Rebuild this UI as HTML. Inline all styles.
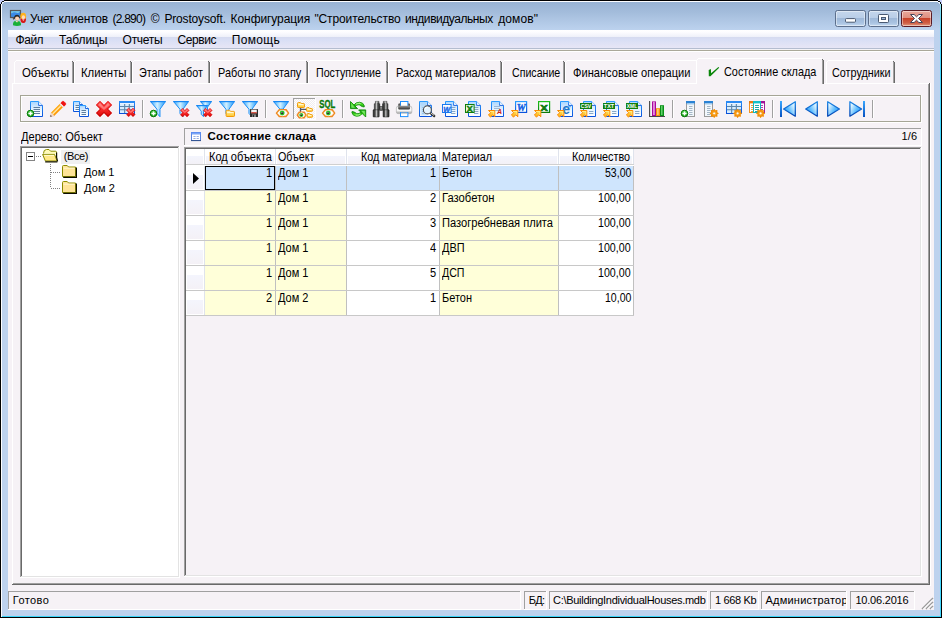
<!DOCTYPE html>
<html lang="ru"><head><meta charset="utf-8"><title>Учет клиентов</title>
<style>
html,body{margin:0;padding:0}
body{width:942px;height:618px;overflow:hidden;position:relative;background:#c6cffa;font-family:"Liberation Sans",sans-serif;font-size:11px;color:#000}
div,span.t,svg{position:absolute;box-sizing:border-box}
.t{white-space:pre;line-height:16px;height:16px}
svg{overflow:visible}
</style></head><body>
<svg width="0" height="0" style="left:0;top:0"><defs>
<linearGradient id="gDoc" x1="0" y1="0" x2="0" y2="1"><stop offset="0" stop-color="#a9d6ff"/><stop offset=".55" stop-color="#e8f4ff"/><stop offset="1" stop-color="#ffffff"/></linearGradient>
<linearGradient id="gDocS" x1="0" y1="0" x2="0" y2="1"><stop offset="0" stop-color="#2a9cff"/><stop offset="1" stop-color="#0a52dc"/></linearGradient>
<linearGradient id="gRed" x1="0" y1="0" x2="0" y2="1"><stop offset="0" stop-color="#ff7a7a"/><stop offset=".5" stop-color="#fb2e2e"/><stop offset="1" stop-color="#e00808"/></linearGradient>
<linearGradient id="gFun" x1="0" y1="0" x2="1" y2="0"><stop offset="0" stop-color="#2f9ffa"/><stop offset=".22" stop-color="#7fcbff"/><stop offset=".45" stop-color="#d4f1ff"/><stop offset=".7" stop-color="#7cc9ff"/><stop offset="1" stop-color="#2b98f5"/></linearGradient>
<linearGradient id="gGreen" x1="0" y1="0" x2="0" y2="1"><stop offset="0" stop-color="#58e058"/><stop offset="1" stop-color="#069006"/></linearGradient>
<linearGradient id="gOr" x1="0" y1="0" x2="0" y2="1"><stop offset="0" stop-color="#ffea6a"/><stop offset="1" stop-color="#ffa808"/></linearGradient>
<linearGradient id="gFold" x1="0" y1="0" x2="0" y2="1"><stop offset="0" stop-color="#fff2a8"/><stop offset="1" stop-color="#ffc62e"/></linearGradient>
<linearGradient id="gNav" x1="0" y1="0" x2="0" y2="1"><stop offset="0" stop-color="#e8f6ff"/><stop offset=".5" stop-color="#8ccfff"/><stop offset="1" stop-color="#3fa2f2"/></linearGradient>
<linearGradient id="gGray" x1="0" y1="0" x2="0" y2="1"><stop offset="0" stop-color="#f4f4f4"/><stop offset=".5" stop-color="#9a9a9a"/><stop offset="1" stop-color="#e0e0e0"/></linearGradient>
<linearGradient id="gBin" x1="0" y1="0" x2="1" y2="0"><stop offset="0" stop-color="#262626"/><stop offset=".3" stop-color="#4c4c4c"/><stop offset=".5" stop-color="#c4c4c4"/><stop offset=".68" stop-color="#585858"/><stop offset="1" stop-color="#1c1c1c"/></linearGradient>
<linearGradient id="gTbl" x1="0" y1="0" x2="0" y2="1"><stop offset="0" stop-color="#2a8cf4"/><stop offset="1" stop-color="#0a50d8"/></linearGradient>
<radialGradient id="gEye" cx=".5" cy=".5" r=".5"><stop offset="0" stop-color="#202020"/><stop offset=".38" stop-color="#303030"/><stop offset=".5" stop-color="#22b022"/><stop offset="1" stop-color="#3fd43f"/></radialGradient>
<linearGradient id="gPrn" x1="0" y1="0" x2="0" y2="1"><stop offset="0" stop-color="#e8e8e8"/><stop offset=".55" stop-color="#ffffff"/><stop offset="1" stop-color="#9c9c9c"/></linearGradient>
<linearGradient id="gPrnD" x1="0" y1="0" x2="0" y2="1"><stop offset="0" stop-color="#3a3a3a"/><stop offset=".5" stop-color="#8a8a8a"/><stop offset="1" stop-color="#303030"/></linearGradient>
<linearGradient id="gRedO" x1="0" y1="0" x2="0" y2="1"><stop offset="0" stop-color="#f83030"/><stop offset="1" stop-color="#b80000"/></linearGradient>
<linearGradient id="gGreen2" x1="0" y1="0" x2="0" y2="1"><stop offset="0" stop-color="#86f25a"/><stop offset=".5" stop-color="#3fd41c"/><stop offset="1" stop-color="#12a008"/></linearGradient>
<linearGradient id="gGrS" x1="0" y1="0" x2="0" y2="1"><stop offset="0" stop-color="#1cc01c"/><stop offset="1" stop-color="#0a7a0a"/></linearGradient>
<linearGradient id="gNavR" x1="0" y1="0.1" x2="1" y2="0.75"><stop offset="0" stop-color="#ffffff"/><stop offset=".22" stop-color="#cfeeff"/><stop offset=".6" stop-color="#5cbcff"/><stop offset="1" stop-color="#1e96f8"/></linearGradient>
<linearGradient id="gNavL" x1="1" y1="0.1" x2="0" y2="0.75"><stop offset="0" stop-color="#ffffff"/><stop offset=".22" stop-color="#cfeeff"/><stop offset=".6" stop-color="#5cbcff"/><stop offset="1" stop-color="#1e96f8"/></linearGradient>
<linearGradient id="gNavS" x1="0" y1="0" x2="0" y2="1"><stop offset="0" stop-color="#1a86e6"/><stop offset="1" stop-color="#0546b4"/></linearGradient>
<linearGradient id="gNavB" x1="0" y1="0" x2="0" y2="1"><stop offset="0" stop-color="#3aa8ff"/><stop offset="1" stop-color="#0650c0"/></linearGradient>
</defs></svg>
<div style="left:0px;top:0px;width:942px;height:618px;background:#000"></div>
<div style="left:1px;top:1px;width:940px;height:616px;background:#fcfdff"></div>
<div style="left:2px;top:1px;width:939px;height:616px;background:linear-gradient(#fcfdff 0,#fcfdff 1px,#a8ecfa 3px,#7fe0f8 10px,#40d8ff 30px,#40d8ff 100%)"></div>
<div style="left:2px;top:2px;width:938px;height:614px;background:linear-gradient(#98b3d4 0px,#a3bcdb 10px,#b4cbe8 22px,#bcd2ee 28px,#bdd2ee 40px,#bdd2ee 100%)"></div>
<div style="left:2px;top:616px;width:938px;height:1px;background:#38d4f8"></div>
<div style="left:0px;top:0px;width:4px;height:1px;background:#c6cffa"></div>
<div style="left:0px;top:1px;width:2px;height:1px;background:#c6cffa"></div>
<div style="left:0px;top:2px;width:1px;height:2px;background:#c6cffa"></div>
<div style="left:2px;top:1px;width:2px;height:1px;background:#101418"></div>
<div style="left:1px;top:2px;width:1px;height:2px;background:#101418"></div>
<div style="left:2px;top:2px;width:2px;height:1px;background:#eef5fb"></div>
<div style="left:2px;top:3px;width:1px;height:1px;background:#e2eef9"></div>
<div style="left:938px;top:0px;width:4px;height:1px;background:#c6cffa"></div>
<div style="left:940px;top:1px;width:2px;height:1px;background:#c6cffa"></div>
<div style="left:941px;top:2px;width:1px;height:2px;background:#c6cffa"></div>
<div style="left:938px;top:1px;width:2px;height:1px;background:#101418"></div>
<div style="left:940px;top:2px;width:1px;height:2px;background:#101418"></div>
<div style="left:938px;top:2px;width:2px;height:1px;background:#eef5fb"></div>
<div style="left:939px;top:3px;width:1px;height:1px;background:#e2eef9"></div>
<div style="left:8px;top:30px;width:926px;height:580px;background:#f6f2f6"></div>
<svg style="left:9px;top:9px" width="18" height="18" viewBox="0 0 18 18"><rect x="1.5" y="1.5" width="10" height="7" fill="#3a8ae8" stroke="#585858" stroke-width="1.2"/><path d="M2.2 4.4Q5 2.4 7 3.6T10.8 3V2.2H2.2Z" fill="#7ed0e8"/><path d="M4 10.2L6 8.6" stroke="#404040" stroke-width="1.2"/><ellipse cx="14.2" cy="7.2" rx="2.9" ry="3.4" fill="#ffb21c"/><ellipse cx="14.4" cy="8.2" rx="1.6" ry="1.9" fill="#ffd8c0"/><path d="M11.4 9.2Q11 13.8 14.2 14T17 9.2Q14.2 11.4 11.4 9.2Z" fill="#d81818"/><path d="M13 10.4L14.3 11.8L15.6 10.4Z" fill="#fff"/><ellipse cx="8" cy="8.2" rx="2.7" ry="2.5" fill="#282828"/><ellipse cx="8.1" cy="9.6" rx="2.1" ry="2.2" fill="#ffd4b4"/><path d="M4 16.2Q3.6 11.6 8 11.8T12 16.2Q8 17.6 4 16.2Z" fill="#18b038"/><path d="M6.4 12L8 13.6L9.6 12Z" fill="#f0fff0"/><path d="M7.6 12H8.6L8.2 13Z" fill="#e84010"/></svg>
<span class="t" style="top:11px;font-size:12px;left:30.10px;letter-spacing:-0.649px;">Учет</span>
<span class="t" style="top:11px;font-size:12px;left:58.60px;letter-spacing:-0.171px;">клиентов</span>
<span class="t" style="top:11px;font-size:12px;left:112.40px;letter-spacing:-0.753px;">(2.890)</span>
<span class="t" style="top:11px;font-size:12px;left:150.80px;">©</span>
<span class="t" style="top:11px;font-size:12px;left:164.40px;letter-spacing:-0.159px;">Prostoysoft.</span>
<span class="t" style="top:11px;font-size:12px;left:230.60px;letter-spacing:-0.084px;">Конфигурация</span>
<span class="t" style="top:11px;font-size:12px;left:314.40px;letter-spacing:-0.113px;">"Строительство</span>
<span class="t" style="top:11px;font-size:12px;left:404.90px;letter-spacing:-0.450px;">индивидуальных</span>
<span class="t" style="top:11px;font-size:12px;left:498.20px;letter-spacing:0.094px;">домов"</span>
<div style="left:835px;top:10px;width:31px;height:17px;background:linear-gradient(#c4d6ec 0,#b9cee8 45%,#9fb9d9 50%,#aac4e2 80%,#c3d8ef 100%);border:1px solid #5c6f8c;border-radius:2.5px;box-shadow:inset 0 0 0 1px rgba(255,255,255,.45)"></div>
<div style="left:868px;top:10px;width:31px;height:17px;background:linear-gradient(#c4d6ec 0,#b9cee8 45%,#9fb9d9 50%,#aac4e2 80%,#c3d8ef 100%);border:1px solid #5c6f8c;border-radius:2.5px;box-shadow:inset 0 0 0 1px rgba(255,255,255,.45)"></div>
<div style="left:901px;top:10px;width:31px;height:17px;background:linear-gradient(#e9a99c 0,#de8f80 45%,#c8432a 50%,#cf5f45 80%,#e29a80 100%);border:1px solid #5a1a24;border-radius:2.5px;box-shadow:inset 0 0 0 1px rgba(255,255,255,.45)"></div>
<svg style="left:835px;top:10px" width="97" height="17" viewBox="0 0 97 17"><rect x="10.5" y="8.6" width="10" height="3.6" rx=".9" fill="#fff" stroke="#4a5a72"/><rect x="43.5" y="4.5" width="10" height="8" rx=".8" fill="#fff" stroke="#4a5a72"/><rect x="46.5" y="7.5" width="4" height="2" fill="#9db5d5" stroke="#4a5a72"/><path d="M75.5 4.5h3.6l2.4 2.3 2.4-2.3h3.6l-4 4 4 4h-3.6l-2.4-2.3-2.4 2.3h-3.6l4-4z" fill="#fff" stroke="#45455a" stroke-width="1"/></svg>
<div style="left:8px;top:30px;width:926px;height:18px;background:linear-gradient(#ffffff 0,#fdfdff 2px,#eef0f9 7px,#d5daef 7px,#d9dff5 10px,#e7e6f6 18px)"></div>
<div style="left:8px;top:48px;width:926px;height:1px;background:#b4bdd0"></div>
<div style="left:8px;top:49px;width:926px;height:1px;background:#f4f3f7"></div>
<div style="left:8px;top:50px;width:926px;height:1px;background:#aaa899"></div>
<div style="left:8px;top:51px;width:926px;height:1px;background:#ffffff"></div>
<span class="t" style="top:32px;font-size:12px;left:15.60px;letter-spacing:-0.500px;">Файл</span>
<span class="t" style="top:32px;font-size:12px;left:59.00px;letter-spacing:-0.101px;">Таблицы</span>
<span class="t" style="top:32px;font-size:12px;left:122.60px;letter-spacing:-0.295px;">Отчеты</span>
<span class="t" style="top:32px;font-size:12px;left:177.50px;letter-spacing:-0.418px;">Сервис</span>
<span class="t" style="top:32px;font-size:12px;left:231.80px;letter-spacing:0.331px;">Помощь</span>
<div style="left:12px;top:83px;width:918px;height:1px;background:#ffffff"></div>
<div style="left:12px;top:83px;width:1px;height:502px;background:#ffffff"></div>
<div style="left:929px;top:83px;width:1px;height:502px;background:#696969"></div>
<div style="left:928px;top:84px;width:1px;height:500px;background:#a0a0a0"></div>
<div style="left:930px;top:83px;width:1px;height:503px;background:#ffffff"></div>
<div style="left:12px;top:584px;width:918px;height:1px;background:#696969"></div>
<div style="left:13px;top:583px;width:916px;height:1px;background:#a0a0a0"></div>
<div style="left:14px;top:62px;width:1px;height:21px;background:#ffffff"></div>
<div style="left:16px;top:60px;width:56px;height:1px;background:#ffffff"></div>
<div style="left:15px;top:61px;width:1px;height:1px;background:#ffffff"></div>
<div style="left:72px;top:62px;width:1px;height:21px;background:#a0a0a0"></div>
<div style="left:73px;top:62px;width:1px;height:21px;background:#696969"></div>
<div style="left:72px;top:61px;width:1px;height:1px;background:#696969"></div>
<span class="t" style="top:65px;font-size:12.4px;left:21.50px;transform:scaleX(0.9191);transform-origin:0 0;">Объекты</span>
<div style="left:74px;top:62px;width:1px;height:21px;background:#ffffff"></div>
<div style="left:76px;top:60px;width:54px;height:1px;background:#ffffff"></div>
<div style="left:75px;top:61px;width:1px;height:1px;background:#ffffff"></div>
<div style="left:130px;top:62px;width:1px;height:21px;background:#a0a0a0"></div>
<div style="left:131px;top:62px;width:1px;height:21px;background:#696969"></div>
<div style="left:130px;top:61px;width:1px;height:1px;background:#696969"></div>
<span class="t" style="top:65px;font-size:12.4px;left:81.00px;transform:scaleX(0.9152);transform-origin:0 0;">Клиенты</span>
<div style="left:132px;top:62px;width:1px;height:21px;background:#ffffff"></div>
<div style="left:134px;top:60px;width:74px;height:1px;background:#ffffff"></div>
<div style="left:133px;top:61px;width:1px;height:1px;background:#ffffff"></div>
<div style="left:208px;top:62px;width:1px;height:21px;background:#a0a0a0"></div>
<div style="left:209px;top:62px;width:1px;height:21px;background:#696969"></div>
<div style="left:208px;top:61px;width:1px;height:1px;background:#696969"></div>
<span class="t" style="top:65px;font-size:12.4px;left:139.00px;transform:scaleX(0.8694);transform-origin:0 0;">Этапы работ</span>
<div style="left:210px;top:62px;width:1px;height:21px;background:#ffffff"></div>
<div style="left:212px;top:60px;width:94px;height:1px;background:#ffffff"></div>
<div style="left:211px;top:61px;width:1px;height:1px;background:#ffffff"></div>
<div style="left:306px;top:62px;width:1px;height:21px;background:#a0a0a0"></div>
<div style="left:307px;top:62px;width:1px;height:21px;background:#696969"></div>
<div style="left:306px;top:61px;width:1px;height:1px;background:#696969"></div>
<span class="t" style="top:65px;font-size:12.4px;left:218.00px;transform:scaleX(0.8770);transform-origin:0 0;">Работы по этапу</span>
<div style="left:308px;top:62px;width:1px;height:21px;background:#ffffff"></div>
<div style="left:310px;top:60px;width:76px;height:1px;background:#ffffff"></div>
<div style="left:309px;top:61px;width:1px;height:1px;background:#ffffff"></div>
<div style="left:386px;top:62px;width:1px;height:21px;background:#a0a0a0"></div>
<div style="left:387px;top:62px;width:1px;height:21px;background:#696969"></div>
<div style="left:386px;top:61px;width:1px;height:1px;background:#696969"></div>
<span class="t" style="top:65px;font-size:12.4px;left:316.00px;transform:scaleX(0.8605);transform-origin:0 0;">Поступление</span>
<div style="left:388px;top:62px;width:1px;height:21px;background:#ffffff"></div>
<div style="left:390px;top:60px;width:110px;height:1px;background:#ffffff"></div>
<div style="left:389px;top:61px;width:1px;height:1px;background:#ffffff"></div>
<div style="left:500px;top:62px;width:1px;height:21px;background:#a0a0a0"></div>
<div style="left:501px;top:62px;width:1px;height:21px;background:#696969"></div>
<div style="left:500px;top:61px;width:1px;height:1px;background:#696969"></div>
<span class="t" style="top:65px;font-size:12.4px;left:395.50px;transform:scaleX(0.8812);transform-origin:0 0;">Расход материалов</span>
<div style="left:502px;top:62px;width:1px;height:21px;background:#ffffff"></div>
<div style="left:504px;top:60px;width:59px;height:1px;background:#ffffff"></div>
<div style="left:503px;top:61px;width:1px;height:1px;background:#ffffff"></div>
<div style="left:563px;top:62px;width:1px;height:21px;background:#a0a0a0"></div>
<div style="left:564px;top:62px;width:1px;height:21px;background:#696969"></div>
<div style="left:563px;top:61px;width:1px;height:1px;background:#696969"></div>
<span class="t" style="top:65px;font-size:12.4px;left:511.70px;transform:scaleX(0.8570);transform-origin:0 0;">Списание</span>
<div style="left:565px;top:62px;width:1px;height:21px;background:#ffffff"></div>
<div style="left:567px;top:60px;width:129px;height:1px;background:#ffffff"></div>
<div style="left:566px;top:61px;width:1px;height:1px;background:#ffffff"></div>
<div style="left:696px;top:62px;width:1px;height:21px;background:#a0a0a0"></div>
<div style="left:697px;top:62px;width:1px;height:21px;background:#696969"></div>
<div style="left:696px;top:61px;width:1px;height:1px;background:#696969"></div>
<span class="t" style="top:65px;font-size:12.4px;left:572.80px;transform:scaleX(0.8958);transform-origin:0 0;">Финансовые операции</span>
<div style="left:826px;top:62px;width:1px;height:21px;background:#ffffff"></div>
<div style="left:828px;top:60px;width:65px;height:1px;background:#ffffff"></div>
<div style="left:827px;top:61px;width:1px;height:1px;background:#ffffff"></div>
<div style="left:893px;top:62px;width:1px;height:21px;background:#a0a0a0"></div>
<div style="left:894px;top:62px;width:1px;height:21px;background:#696969"></div>
<div style="left:893px;top:61px;width:1px;height:1px;background:#696969"></div>
<span class="t" style="top:65px;font-size:12.4px;left:831.60px;transform:scaleX(0.8725);transform-origin:0 0;">Сотрудники</span>
<div style="left:696px;top:58px;width:128px;height:27px;background:#f6f2f6"></div>
<div style="left:696px;top:60px;width:1px;height:24px;background:#ffffff"></div>
<div style="left:698px;top:58px;width:124px;height:1px;background:#ffffff"></div>
<div style="left:697px;top:59px;width:1px;height:1px;background:#ffffff"></div>
<div style="left:822px;top:60px;width:1px;height:24px;background:#a0a0a0"></div>
<div style="left:823px;top:60px;width:1px;height:24px;background:#696969"></div>
<div style="left:822px;top:59px;width:1px;height:1px;background:#696969"></div>
<span class="t" style="top:64px;font-size:12.4px;left:724.00px;transform:scaleX(0.8772);transform-origin:0 0;">Состояние склада</span>
<svg style="left:707px;top:64px" width="14" height="14" viewBox="0 0 14 14"><path d="M1.7 6.1L3.9 4.9L4.1 9.2L11.4 2.9L12.2 3.8L3.5 12.3H1.8Z" fill="#0a860a"/></svg>
<div style="left:20px;top:95px;width:901px;height:1px;background:#a5a596"></div>
<div style="left:20px;top:95px;width:1px;height:27px;background:#a5a596"></div>
<div style="left:21px;top:96px;width:899px;height:1px;background:#ffffff"></div>
<div style="left:21px;top:96px;width:1px;height:25px;background:#ffffff"></div>
<div style="left:21px;top:121px;width:900px;height:1px;background:#a5a596"></div>
<div style="left:920px;top:96px;width:1px;height:26px;background:#a5a596"></div>
<div style="left:20px;top:122px;width:902px;height:1px;background:#ffffff"></div>
<div style="left:921px;top:95px;width:1px;height:28px;background:#ffffff"></div>
<svg style="left:27px;top:101px" width="16" height="16" viewBox="0 0 16 16"><path d="M3.5 0.5H11.6L15.5 4.4V15.5H3.5Z" fill="url(#gDoc)" stroke="url(#gDocS)"/><path d="M11.6 0.5V4.4H15.5" fill="#fff" stroke="url(#gDocS)" stroke-width=".9"/><path d="M6.5 6.5H13" stroke="#5f7f9f" stroke-width="1"/><path d="M6.5 8.5H13" stroke="#5f7f9f" stroke-width="1"/><path d="M6.5 10.5H13" stroke="#5f7f9f" stroke-width="1"/><path d="M6.5 12.5H13" stroke="#5f7f9f" stroke-width="1"/><circle cx="3.5" cy="12.5" r="3.3" fill="url(#gGreen)" stroke="#077807" stroke-width="1"/><path d="M1.4 12.5h4.2M3.5 10.4v4.2" stroke="#fff" stroke-width="1.5"/></svg>
<svg style="left:50px;top:101px" width="16" height="16" viewBox="0 0 16 16"><path d="M0.30 15.70L1.25 11.56L4.44 14.75Z" fill="#fbe2d2" stroke="#dcaa92" stroke-width=".5"/><path d="M0.30 15.70L0.65 14.07L1.93 15.35Z" fill="#2a2a2a"/><path d="M1.25 11.56L9.74 3.08L12.92 6.26L4.44 14.75Z" fill="#ff9a06"/><path d="M1.25 11.56L9.74 3.08L10.41 3.75L1.93 12.24Z" fill="#ffb52e"/><path d="M2.21 12.52L10.69 4.03L11.68 5.02L3.20 13.51Z" fill="#ffe9a6"/><path d="M9.74 3.08L10.87 1.95L14.05 5.13L12.92 6.26Z" fill="#f6f2ee" stroke="#cfc6bc" stroke-width=".4"/><path d="M10.87 1.95L12.36 0.46L13.77 0.46L15.54 2.23L15.54 3.64L14.05 5.13Z" fill="#f01212" stroke="#f01212" stroke-width=".8" stroke-linejoin="round"/></svg>
<svg style="left:73px;top:101px" width="16" height="16" viewBox="0 0 16 16"><path d="M0.5 0.5H6.5L9.5 3.5V10.5H0.5Z" fill="url(#gDoc)" stroke="url(#gDocS)"/><path d="M6.5 0.5V3.5H9.5" fill="#fff" stroke="url(#gDocS)" stroke-width=".9"/><path d="M2.5 4.5H6.5" stroke="#5f7f9f" stroke-width="1"/><path d="M2.5 6.5H6.5" stroke="#5f7f9f" stroke-width="1"/><path d="M2.5 8.5H6.5" stroke="#5f7f9f" stroke-width="1"/><path d="M6.5 4.5H12.5L15.5 7.5V15.5H6.5Z" fill="url(#gDoc)" stroke="url(#gDocS)"/><path d="M12.5 4.5V7.5H15.5" fill="#fff" stroke="url(#gDocS)" stroke-width=".9"/><path d="M8.5 9.5H13" stroke="#5f7f9f" stroke-width="1"/><path d="M8.5 11.5H13" stroke="#5f7f9f" stroke-width="1"/><path d="M8.5 13.5H13" stroke="#5f7f9f" stroke-width="1"/></svg>
<svg style="left:96px;top:101px" width="16" height="16" viewBox="0 0 16 16"><path d="M4.00 0.00L8.00 4.00L12.00 0.00L16.00 4.00L12.00 8.00L16.00 12.00L12.00 16.00L8.00 12.00L4.00 16.00L0.00 12.00L4.00 8.00L0.00 4.00Z" fill="url(#gRedO)" stroke="#e82020" stroke-width=".5" stroke-linejoin="round"/><path d="M4.00 1.40L8.00 5.40L12.00 1.40L14.60 4.00L10.60 8.00L14.60 12.00L12.00 14.60L8.00 10.60L4.00 14.60L1.40 12.00L5.40 8.00L1.40 4.00Z" fill="url(#gRed)"/><path d="M4.00 2.60L8.00 6.60L12.00 2.60L13.20 4.00L9.20 8.00L8.00 9.00L6.80 8.00L2.80 4.00Z" fill="#ffa0a0" opacity=".6"/></svg>
<svg style="left:119px;top:101px" width="16" height="16" viewBox="0 0 16 16"><rect x="0.5" y="0.5" width="15" height="12" fill="#d6ecff" stroke="url(#gTbl)"/><path d="M0.5 1.3H15.5" stroke="#2a8cf4" stroke-width="1.8"/><path d="M1 2.6H15" stroke="#ffffff" stroke-width=".8"/><path d="M5.666666666666667 3V12M10.333333333333334 3V12M1 5.5H15M1 8.7H15" stroke="#5b86aa" stroke-width="1.1"/><path d="M9.60 7.00L11.80 9.20L14.00 7.00L16.20 9.20L14.00 11.40L16.20 13.60L14.00 15.80L11.80 13.60L9.60 15.80L7.40 13.60L9.60 11.40L7.40 9.20Z" fill="url(#gRedO)" stroke="#e82020" stroke-width=".5" stroke-linejoin="round"/><path d="M9.60 7.77L11.80 9.97L14.00 7.77L15.43 9.20L13.23 11.40L15.43 13.60L14.00 15.03L11.80 12.83L9.60 15.03L8.17 13.60L10.37 11.40L8.17 9.20Z" fill="url(#gRed)"/><path d="M9.60 8.43L11.80 10.63L14.00 8.43L14.66 9.20L12.46 11.40L11.80 11.95L11.14 11.40L8.94 9.20Z" fill="#ffa0a0" opacity=".6"/></svg>
<div style="left:142px;top:100px;width:1px;height:18px;background:#a0a0a0"></div>
<div style="left:143px;top:100px;width:1px;height:18px;background:#ffffff"></div>
<svg style="left:150px;top:101px" width="16" height="16" viewBox="0 0 16 16"><path d="M0.5 0.5H15.5L9.98 8.2V15.7L6.98 12.4V8.2Z" fill="url(#gFun)" stroke="#1e8ef6" stroke-width="1" stroke-linejoin="round"/><path d="M0.5 0.6H15.5" stroke="#1787f2" stroke-width="1.2"/><circle cx="3.5" cy="12.5" r="3.3" fill="url(#gGreen)" stroke="#077807" stroke-width="1"/><path d="M1.4 12.5h4.2M3.5 10.4v4.2" stroke="#fff" stroke-width="1.5"/></svg>
<svg style="left:173px;top:101px" width="16" height="16" viewBox="0 0 16 16"><path d="M0.5 0.5H15.5L9.98 8.2V15.7L6.98 12.4V8.2Z" fill="url(#gFun)" stroke="#1e8ef6" stroke-width="1" stroke-linejoin="round"/><path d="M0.5 0.6H15.5" stroke="#1787f2" stroke-width="1.2"/><path d="M9.60 7.20L11.80 9.40L14.00 7.20L16.20 9.40L14.00 11.60L16.20 13.80L14.00 16.00L11.80 13.80L9.60 16.00L7.40 13.80L9.60 11.60L7.40 9.40Z" fill="url(#gRedO)" stroke="#e82020" stroke-width=".5" stroke-linejoin="round"/><path d="M9.60 7.97L11.80 10.17L14.00 7.97L15.43 9.40L13.23 11.60L15.43 13.80L14.00 15.23L11.80 13.03L9.60 15.23L8.17 13.80L10.37 11.60L8.17 9.40Z" fill="url(#gRed)"/><path d="M9.60 8.63L11.80 10.83L14.00 8.63L14.66 9.40L12.46 11.60L11.80 12.15L11.14 11.60L8.94 9.40Z" fill="#ffa0a0" opacity=".6"/></svg>
<svg style="left:196px;top:101px" width="16" height="16" viewBox="0 0 16 16"><path d="M4.5 0.5H15.5L11.485 6.1499999999999995V10.7L9.235 8.3V6.1499999999999995Z" fill="url(#gFun)" stroke="#1e8ef6" stroke-width="1" stroke-linejoin="round"/><path d="M4.5 0.6H15.5" stroke="#1787f2" stroke-width="1.2"/><path d="M0.5 4.5H11.5L7.485 10.149999999999999V15.7L5.235 13.3V10.149999999999999Z" fill="url(#gFun)" stroke="#1e8ef6" stroke-width="1" stroke-linejoin="round"/><path d="M0.5 4.6H11.5" stroke="#1787f2" stroke-width="1.2"/><path d="M9.60 7.20L11.80 9.40L14.00 7.20L16.20 9.40L14.00 11.60L16.20 13.80L14.00 16.00L11.80 13.80L9.60 16.00L7.40 13.80L9.60 11.60L7.40 9.40Z" fill="url(#gRedO)" stroke="#e82020" stroke-width=".5" stroke-linejoin="round"/><path d="M9.60 7.97L11.80 10.17L14.00 7.97L15.43 9.40L13.23 11.60L15.43 13.80L14.00 15.23L11.80 13.03L9.60 15.23L8.17 13.80L10.37 11.60L8.17 9.40Z" fill="url(#gRed)"/><path d="M9.60 8.63L11.80 10.83L14.00 8.63L14.66 9.40L12.46 11.60L11.80 12.15L11.14 11.60L8.94 9.40Z" fill="#ffa0a0" opacity=".6"/></svg>
<svg style="left:219px;top:101px" width="16" height="16" viewBox="0 0 16 16"><path d="M0.5 0.5H15.5L9.98 8.2V15.7L6.98 12.4V8.2Z" fill="url(#gFun)" stroke="#1e8ef6" stroke-width="1" stroke-linejoin="round"/><path d="M0.5 0.6H15.5" stroke="#1787f2" stroke-width="1.2"/><path d="M7.1 10.3Q7.1 9.3 8.1 9.3H10.548L11.77 10.4H14.8Q15.5 10.4 15.5 11.200000000000001V14.8Q15.5 15.5 14.7 15.5H7.8999999999999995Q7.1 15.5 7.1 14.7Z" fill="url(#gFold)" stroke="#f29a08" stroke-width="1"/><path d="M8.1 11.4H14.4" stroke="#fffbe0" stroke-width="1"/></svg>
<svg style="left:242px;top:101px" width="16" height="16" viewBox="0 0 16 16"><path d="M0.5 0.5H15.5L9.98 8.2V15.7L6.98 12.4V8.2Z" fill="url(#gFun)" stroke="#1e8ef6" stroke-width="1" stroke-linejoin="round"/><path d="M0.5 0.6H15.5" stroke="#1787f2" stroke-width="1.2"/><rect x="8" y="8" width="8" height="8" rx=".6" fill="#2c2c2c"/><rect x="9.2" y="8.6" width="5.6" height="3.6" fill="#f4f4f4"/><rect x="9.2" y="11.2" width="5.6" height="1.1" fill="#d03020"/><rect x="10" y="13.4" width="4" height="2.6" fill="#8a8a8a"/><rect x="10.8" y="13.9" width="1.2" height="2.1" fill="#2c2c2c"/></svg>
<div style="left:265px;top:100px;width:1px;height:18px;background:#a0a0a0"></div>
<div style="left:266px;top:100px;width:1px;height:18px;background:#ffffff"></div>
<svg style="left:273px;top:101px" width="16" height="16" viewBox="0 0 16 16"><path d="M0.5 0.5H15.5L9.98 8.2H6.98Z" fill="url(#gFun)" stroke="#1e8ef6" stroke-width="1" stroke-linejoin="round"/><path d="M0.5 0.6H15.5" stroke="#1787f2" stroke-width="1.2"/><path d="M3.4 12.1L6.25 8.75H13.14L15.6 12.1L13.14 15.45H6.25Z" fill="#fbe3c8" stroke="#ee8a22" stroke-width="1.4" stroke-linejoin="round"/><path d="M4.7 12.1Q9.5 5.734999999999999 14.3 12.1Q9.5 18.465 4.7 12.1Z" fill="#fff"/><circle cx="9.2" cy="12.1" r="2.479" fill="url(#gEye)"/><circle cx="8.9" cy="11.6" r=".6" fill="#b8b8b8"/></svg>
<div style="left:293px;top:98px;width:23px;height:22px;background-image:repeating-conic-gradient(#fff 0 25%,#f0ecf0 0 50%);background-size:2px 2px"></div>
<div style="left:293px;top:98px;width:23px;height:1px;background:#a0a0a0"></div>
<div style="left:293px;top:98px;width:1px;height:22px;background:#a0a0a0"></div>
<div style="left:293px;top:119px;width:23px;height:1px;background:#ffffff"></div>
<div style="left:315px;top:98px;width:1px;height:22px;background:#ffffff"></div>
<svg style="left:297px;top:102px" width="16" height="16" viewBox="0 0 16 16"><path d="M0.5 1.5Q0.5 0.5 1.5 0.5H3.36L4.4 1.6H6.8Q7.5 1.6 7.5 2.4V4.8Q7.5 5.5 6.7 5.5H1.3Q0.5 5.5 0.5 4.7Z" fill="url(#gFold)" stroke="#f29a08" stroke-width="1"/><path d="M1.5 2.6H6.4" stroke="#fffbe0" stroke-width="1"/><path d="M3.5 6V10M3.5 7.4H9" stroke="#505868" stroke-width="1.3" fill="none"/><path d="M9.5 6.5Q9.5 5.5 10.5 5.5H11.94L12.850000000000001 6.6H14.8Q15.5 6.6 15.5 7.4V8.600000000000001Q15.5 9.3 14.7 9.3H10.3Q9.5 9.3 9.5 8.5Z" fill="url(#gFold)" stroke="#f29a08" stroke-width="1"/><path d="M10.5 7.6H14.4" stroke="#fffbe0" stroke-width="1"/><path d="M10.1 12.5Q10.1 11.5 11.1 11.5H12.288L13.120000000000001 12.6H14.8Q15.5 12.6 15.5 13.4V14.600000000000001Q15.5 15.3 14.7 15.3H10.9Q10.1 15.3 10.1 14.5Z" fill="url(#gFold)" stroke="#f29a08" stroke-width="1"/><path d="M11.1 13.6H14.4" stroke="#fffbe0" stroke-width="1"/><path d="M0.2999999999999995 13L2.2499999999999996 10.2H7.232L8.9 13L7.232 15.8H2.2499999999999996Z" fill="#fbe3c8" stroke="#ee8a22" stroke-width="1.4" stroke-linejoin="round"/><path d="M1.5999999999999994 13Q4.6 7.680000000000001 7.6000000000000005 13Q4.6 18.32 1.5999999999999994 13Z" fill="#fff"/><circle cx="4.3" cy="13" r="2.072" fill="url(#gEye)"/><circle cx="3.9999999999999996" cy="12.5" r=".6" fill="#b8b8b8"/></svg>
<svg style="left:319px;top:101px" width="16" height="16" viewBox="0 0 16 16"><text stroke="#0a7a0a" stroke-width=".35" x="8.2" y="7.1" font-family="Liberation Sans, sans-serif" font-weight="bold" font-size="10.2" fill="#0a7a0a" text-anchor="middle" textLength="16" lengthAdjust="spacingAndGlyphs">SQL</text><path d="M3.4999999999999996 12.1L6.35 8.75H13.24L15.700000000000001 12.1L13.24 15.45H6.35Z" fill="#fbe3c8" stroke="#ee8a22" stroke-width="1.4" stroke-linejoin="round"/><path d="M4.8 12.1Q9.6 5.734999999999999 14.400000000000002 12.1Q9.6 18.465 4.8 12.1Z" fill="#fff"/><circle cx="9.299999999999999" cy="12.1" r="2.479" fill="url(#gEye)"/><circle cx="9.0" cy="11.6" r=".6" fill="#b8b8b8"/></svg>
<div style="left:342px;top:100px;width:1px;height:18px;background:#a0a0a0"></div>
<div style="left:343px;top:100px;width:1px;height:18px;background:#ffffff"></div>
<svg style="left:350px;top:101px" width="16" height="16" viewBox="0 0 16 16"><g id="rfA"><path d="M3.4 4.6Q5.6 1 9.6 1.2Q13.4 1.5 14.3 4.8L14.2 6Q12.4 5.8 11 5Q10 3.7 8.2 3.8Q6.2 4 5.2 5.8Z" fill="url(#gGreen2)" stroke="#0f8a0c" stroke-width=".8" stroke-linejoin="round"/><path d="M.5 .5V7.6H7.6Z" fill="url(#gGreen2)" stroke="#0f8a0c" stroke-width=".9" stroke-linejoin="round"/><path d="M1.4 3V6.7H5Z" fill="#8af07a" opacity=".8"/><path d="M6 3.2Q8 2 10.6 2.6" stroke="#a4f890" stroke-width=".9" fill="none"/></g><use href="#rfA" transform="rotate(180 8.1 8.25)"/></svg>
<svg style="left:373px;top:101px" width="16" height="16" viewBox="0 0 16 16"><rect x="6.4" y="5" width="3.4" height="5" fill="#6a6a6a"/><rect x="6.4" y="6" width="3.4" height="1.6" fill="#909090"/><path d="M2.4 .4H6V2.7H6.8V8.4L6.2 9V15.4Q6.2 16 5.6 16H.7Q.1 16 .1 15.4V9L1.3 8.4V2.7H2.4Z" fill="url(#gBin)" stroke="#242424" stroke-width=".5"/><path d="M10.3 .4H13.9V2.7H15V8.4L16.1 9V15.4Q16.1 16 15.5 16H10.6Q10 16 10 15.4V9L9.5 8.4V2.7H10.3Z" fill="url(#gBin)" stroke="#242424" stroke-width=".5"/><path d="M2.9 1.1H5.5M10.8 1.1H13.4" stroke="#d0d0d0" stroke-width=".8"/><path d="M.4 8.8H6.4M9.8 8.8H15.8" stroke="#1c1c1c" stroke-width=".7" opacity=".7"/></svg>
<svg style="left:396px;top:101px" width="16" height="16" viewBox="0 0 16 16"><rect x="4.5" y=".5" width="7.4" height="5" fill="#fff" stroke="#1e90ff"/><path d="M.4 7.2Q.4 5 2.4 5H13.8Q15.8 5 15.8 7.2V11Q15.8 12.6 14.2 12.6H2Q.4 12.6 .4 11Z" fill="url(#gPrn)" stroke="#a8a8a8" stroke-width=".6"/><path d="M2.2 3.4Q2.2 2.4 3.2 2.4H4.2V5H12.2V2.4H13Q14 2.4 14 3.4V7.4Q14 8.4 13 8.4H3.2Q2.2 8.4 2.2 7.4Z" fill="url(#gPrnD)"/><rect x="4.5" y="11.6" width="7.4" height="4" fill="#fff" stroke="#1e90ff"/><path d="M5 12H11.4" stroke="#b0b0b0" stroke-width="1"/></svg>
<svg style="left:419px;top:101px" width="16" height="16" viewBox="0 0 16 16"><path d="M0.5 0.5H8.6L12.5 4.4V15.5H0.5Z" fill="url(#gDoc)" stroke="url(#gDocS)"/><path d="M8.6 0.5V4.4H12.5" fill="#fff" stroke="url(#gDocS)" stroke-width=".9"/><path d="M3 6.5H5" stroke="#8fb0d0" stroke-width="1"/><path d="M3 8.5H5" stroke="#8fb0d0" stroke-width="1"/><path d="M3 10.5H5" stroke="#8fb0d0" stroke-width="1"/><path d="M3 12.5H5" stroke="#8fb0d0" stroke-width="1"/><rect x="1.6" y="1.6" width="6" height="13" fill="#a8d4f8" opacity=".55"/><path d="M11.6 12.2L15.2 15" stroke="#303030" stroke-width="2.3" stroke-linecap="round"/><path d="M11.8 11.9L14.8 14.2" stroke="#e8e8e8" stroke-width=".9" stroke-linecap="round"/><circle cx="8.4" cy="8.9" r="4" fill="#e6f4ff" fill-opacity=".92" stroke="#505050" stroke-width="1.1"/><path d="M6 8Q6.8 6.2 8.8 6.1" stroke="#fff" stroke-width="1.1" fill="none"/></svg>
<svg style="left:442px;top:101px" width="16" height="16" viewBox="0 0 16 16"><path d="M3.5 0.5H11.6L15.5 4.4V15.5H3.5Z" fill="url(#gDoc)" stroke="url(#gDocS)"/><path d="M11.6 0.5V4.4H15.5" fill="#fff" stroke="url(#gDocS)" stroke-width=".9"/><path d="M9 6.5H13.4" stroke="#88a8c8" stroke-width="1"/><path d="M9 8.5H13.4" stroke="#88a8c8" stroke-width="1"/><path d="M9 10.5H13.4" stroke="#88a8c8" stroke-width="1"/><path d="M9 12.5H13.4" stroke="#88a8c8" stroke-width="1"/><rect x=".5" y="3.5" width="8.6" height="8" fill="#fff" stroke="#1a7af0"/><text stroke="#1a6ae8" stroke-width=".4" x="4.8" y="10.6" font-family="Liberation Sans, sans-serif" font-weight="bold" font-style="italic" font-size="8" fill="#1a6ae8" text-anchor="middle" textLength="7" lengthAdjust="spacingAndGlyphs">W</text></svg>
<svg style="left:465px;top:101px" width="16" height="16" viewBox="0 0 16 16"><path d="M3.5 0.5H11.6L15.5 4.4V15.5H3.5Z" fill="url(#gDoc)" stroke="url(#gDocS)"/><path d="M11.6 0.5V4.4H15.5" fill="#fff" stroke="url(#gDocS)" stroke-width=".9"/><path d="M9 6.5H13.4" stroke="#88a8c8" stroke-width="1"/><path d="M9 8.5H13.4" stroke="#88a8c8" stroke-width="1"/><path d="M9 10.5H13.4" stroke="#88a8c8" stroke-width="1"/><path d="M9 12.5H13.4" stroke="#88a8c8" stroke-width="1"/><rect x=".5" y="3.5" width="8.6" height="8" fill="#e8f6e8" stroke="#0d7d0d"/><text stroke="#0d7d0d" stroke-width=".4" x="4.8" y="10.6" font-family="Liberation Sans, sans-serif" font-weight="bold" font-size="8.4" fill="#0d7d0d" text-anchor="middle" textLength="6.4" lengthAdjust="spacingAndGlyphs">X</text></svg>
<svg style="left:488px;top:101px" width="16" height="16" viewBox="0 0 16 16"><path d="M3.5 0.5H11.6L15.5 4.4V15.5H3.5Z" fill="url(#gDoc)" stroke="url(#gDocS)"/><path d="M11.6 0.5V4.4H15.5" fill="#fff" stroke="url(#gDocS)" stroke-width=".9"/><path d="M6 5.5H12" stroke="#9ab8d8" stroke-width="1"/><path d="M6 7.5H12" stroke="#9ab8d8" stroke-width="1"/><path d="M6 9.5H12" stroke="#9ab8d8" stroke-width="1"/><text x="11.6" y="13.2" font-family="Liberation Sans, sans-serif" font-weight="bold" font-style="italic" font-size="7" fill="#d02010" text-anchor="middle">A</text><path d="M0.5 9.5H6.8V15.8L4.8 13.8L2.5 16.1L0.4 14L2.7 11.7Z" fill="url(#gOr)" stroke="#fb8a00" stroke-width="1" stroke-linejoin="round"/><path d="M2 10.5H5.8V14" stroke="#fff3a0" stroke-width=".8" fill="none" opacity=".8"/></svg>
<svg style="left:511px;top:101px" width="16" height="16" viewBox="0 0 16 16"><rect x="4.6" y=".6" width="11" height="10.8" fill="#fff" stroke="url(#gDocS)" stroke-width="1.2"/><text x="10.2" y="9.6" font-family="Liberation Serif, serif" font-weight="bold" font-style="italic" font-size="10.5" fill="#1262e4" stroke="#1262e4" stroke-width=".45" text-anchor="middle" textLength="9" lengthAdjust="spacingAndGlyphs">W</text><path d="M0.5 9.5H6.8V15.8L4.8 13.8L2.5 16.1L0.4 14L2.7 11.7Z" fill="url(#gOr)" stroke="#fb8a00" stroke-width="1" stroke-linejoin="round"/><path d="M2 10.5H5.8V14" stroke="#fff3a0" stroke-width=".8" fill="none" opacity=".8"/></svg>
<svg style="left:534px;top:101px" width="16" height="16" viewBox="0 0 16 16"><rect x="4.6" y=".6" width="11" height="10.8" fill="#fff" stroke="url(#gGrS)" stroke-width="1.2"/><text x="10.1" y="9.5" font-family="Liberation Sans, sans-serif" font-weight="bold" font-size="9.4" fill="#0c7c0c" stroke="#0c7c0c" stroke-width=".7" text-anchor="middle" textLength="7.6" lengthAdjust="spacingAndGlyphs">X</text><path d="M0.5 9.5H6.8V15.8L4.8 13.8L2.5 16.1L0.4 14L2.7 11.7Z" fill="url(#gOr)" stroke="#fb8a00" stroke-width="1" stroke-linejoin="round"/><path d="M2 10.5H5.8V14" stroke="#fff3a0" stroke-width=".8" fill="none" opacity=".8"/></svg>
<svg style="left:557px;top:101px" width="16" height="16" viewBox="0 0 16 16"><path d="M3.5 0.5H11.6L15.5 4.4V15.5H3.5Z" fill="url(#gDoc)" stroke="url(#gDocS)"/><path d="M11.6 0.5V4.4H15.5" fill="#fff" stroke="url(#gDocS)" stroke-width=".9"/><text x="9.2" y="12.8" font-family="Liberation Sans, sans-serif" font-weight="bold" font-size="14" fill="#1e74c8" text-anchor="middle">e</text><path d="M5 11.6Q9 4.8 14 5.6" stroke="#58a8e8" stroke-width=".9" fill="none"/><path d="M0.5 9.5H6.8V15.8L4.8 13.8L2.5 16.1L0.4 14L2.7 11.7Z" fill="url(#gOr)" stroke="#fb8a00" stroke-width="1" stroke-linejoin="round"/><path d="M2 10.5H5.8V14" stroke="#fff3a0" stroke-width=".8" fill="none" opacity=".8"/></svg>
<svg style="left:580px;top:101px" width="16" height="16" viewBox="0 0 16 16"><path d="M3.5 0.5H11.6L15.5 4.4V15.5H3.5Z" fill="url(#gDoc)" stroke="url(#gDocS)"/><path d="M11.6 0.5V4.4H15.5" fill="#fff" stroke="url(#gDocS)" stroke-width=".9"/><path d="M9 10.5H13.4" stroke="#88a8c8" stroke-width="1"/><path d="M9 12.5H13.4" stroke="#88a8c8" stroke-width="1"/><rect x="0" y="2" width="12" height="6" fill="#0f7f0f"/><text x="6" y="7.2" font-family="Liberation Sans, sans-serif" font-weight="bold" font-size="6" fill="#fff" text-anchor="middle" textLength="10.4" lengthAdjust="spacingAndGlyphs">CSV</text><path d="M0.5 9.5H6.8V15.8L4.8 13.8L2.5 16.1L0.4 14L2.7 11.7Z" fill="url(#gOr)" stroke="#fb8a00" stroke-width="1" stroke-linejoin="round"/><path d="M2 10.5H5.8V14" stroke="#fff3a0" stroke-width=".8" fill="none" opacity=".8"/></svg>
<svg style="left:603px;top:101px" width="16" height="16" viewBox="0 0 16 16"><path d="M3.5 0.5H11.6L15.5 4.4V15.5H3.5Z" fill="url(#gDoc)" stroke="url(#gDocS)"/><path d="M11.6 0.5V4.4H15.5" fill="#fff" stroke="url(#gDocS)" stroke-width=".9"/><path d="M9 10.5H13.4" stroke="#88a8c8" stroke-width="1"/><path d="M9 12.5H13.4" stroke="#88a8c8" stroke-width="1"/><rect x="0" y="2" width="12" height="6" fill="#0f7f0f"/><text x="6" y="7.2" font-family="Liberation Sans, sans-serif" font-weight="bold" font-size="6" fill="#fff" text-anchor="middle" textLength="10.4" lengthAdjust="spacingAndGlyphs">TXT</text><path d="M0.5 9.5H6.8V15.8L4.8 13.8L2.5 16.1L0.4 14L2.7 11.7Z" fill="url(#gOr)" stroke="#fb8a00" stroke-width="1" stroke-linejoin="round"/><path d="M2 10.5H5.8V14" stroke="#fff3a0" stroke-width=".8" fill="none" opacity=".8"/></svg>
<svg style="left:626px;top:101px" width="16" height="16" viewBox="0 0 16 16"><path d="M3.5 0.5H11.6L15.5 4.4V15.5H3.5Z" fill="url(#gDoc)" stroke="url(#gDocS)"/><path d="M11.6 0.5V4.4H15.5" fill="#fff" stroke="url(#gDocS)" stroke-width=".9"/><path d="M9 10.5H13.4" stroke="#88a8c8" stroke-width="1"/><path d="M9 12.5H13.4" stroke="#88a8c8" stroke-width="1"/><rect x="0" y="2" width="12" height="6" fill="#0f7f0f"/><text x="6" y="7.2" font-family="Liberation Sans, sans-serif" font-weight="bold" font-size="6" fill="#fff" text-anchor="middle" textLength="10.4" lengthAdjust="spacingAndGlyphs">XML</text><path d="M0.5 9.5H6.8V15.8L4.8 13.8L2.5 16.1L0.4 14L2.7 11.7Z" fill="url(#gOr)" stroke="#fb8a00" stroke-width="1" stroke-linejoin="round"/><path d="M2 10.5H5.8V14" stroke="#fff3a0" stroke-width=".8" fill="none" opacity=".8"/></svg>
<svg style="left:649px;top:101px" width="16" height="16" viewBox="0 0 16 16"><path d="M.6 0V15.5H16" stroke="#484848" stroke-width="1.1" fill="none"/><rect x="3" y=".4" width="4" height="14.6" fill="#a8089c"/><rect x="4.2" y="1" width="1.5" height="13" fill="#f0a8ec"/><rect x="7" y="7.2" width="4" height="7.8" fill="#f6960a"/><rect x="8.2" y="8" width="1.4" height="6" fill="#ffd88a"/><rect x="11" y="4.2" width="4" height="10.8" fill="#0a9018"/><rect x="12.1" y="5" width="1.4" height="9" fill="#6ad874"/></svg>
<div style="left:672px;top:100px;width:1px;height:18px;background:#a0a0a0"></div>
<div style="left:673px;top:100px;width:1px;height:18px;background:#ffffff"></div>
<svg style="left:680px;top:101px" width="16" height="16" viewBox="0 0 16 16"><rect x="6.5" y="0.5" width="8" height="15" fill="#f2f7fc" stroke="#9a9a9a"/><path d="M6 1.2H15" stroke="#2b82d4" stroke-width="2.4"/><path d="M7 3H14" stroke="#9ccaf0" stroke-width="1"/><path d="M9 5.5H12.5" stroke="#a4b6c6" stroke-width="1"/><path d="M9 7.5H12.5" stroke="#a4b6c6" stroke-width="1"/><path d="M9 9.5H12.5" stroke="#a4b6c6" stroke-width="1"/><path d="M9 11.5H12.5" stroke="#a4b6c6" stroke-width="1"/><path d="M9 13.5H12.5" stroke="#a4b6c6" stroke-width="1"/><circle cx="4.5" cy="12.5" r="3.3" fill="url(#gGreen)" stroke="#077807" stroke-width="1"/><path d="M2.4 12.5h4.2M4.5 10.4v4.2" stroke="#fff" stroke-width="1.5"/></svg>
<svg style="left:703px;top:101px" width="16" height="16" viewBox="0 0 16 16"><rect x="1.5" y="0.5" width="8" height="15" fill="#f2f7fc" stroke="#9a9a9a"/><path d="M1 1.2H10" stroke="#2b82d4" stroke-width="2.4"/><path d="M2 3H9" stroke="#9ccaf0" stroke-width="1"/><path d="M4 5.5H7.5" stroke="#a4b6c6" stroke-width="1"/><path d="M4 7.5H7.5" stroke="#a4b6c6" stroke-width="1"/><path d="M4 9.5H7.5" stroke="#a4b6c6" stroke-width="1"/><path d="M4 11.5H7.5" stroke="#a4b6c6" stroke-width="1"/><path d="M4 13.5H7.5" stroke="#a4b6c6" stroke-width="1"/><path d="M15.10 12.40L13.58 13.39L13.96 15.16L12.19 14.78L11.20 16.30L10.21 14.78L8.44 15.16L8.82 13.39L7.30 12.40L8.82 11.41L8.44 9.64L10.21 10.02L11.20 8.50L12.19 10.02L13.96 9.64L13.58 11.41Z" fill="#ffa41c" stroke="#f08a00" stroke-width="1.1" stroke-linejoin="round"/><circle cx="11.2" cy="12.4" r="1.404" fill="#fffaf0" stroke="#e88a00" stroke-width=".6"/></svg>
<svg style="left:726px;top:101px" width="16" height="16" viewBox="0 0 16 16"><rect x="0.5" y="0.5" width="15" height="12" fill="#d6ecff" stroke="url(#gTbl)"/><path d="M0.5 1.3H15.5" stroke="#2a8cf4" stroke-width="1.8"/><path d="M1 2.6H15" stroke="#ffffff" stroke-width=".8"/><path d="M5.666666666666667 3V12M10.333333333333334 3V12M1 5.5H15M1 8.7H15" stroke="#5b86aa" stroke-width="1.1"/><path d="M15.50 12.40L13.98 13.39L14.36 15.16L12.59 14.78L11.60 16.30L10.61 14.78L8.84 15.16L9.22 13.39L7.70 12.40L9.22 11.41L8.84 9.64L10.61 10.02L11.60 8.50L12.59 10.02L14.36 9.64L13.98 11.41Z" fill="#ffa41c" stroke="#f08a00" stroke-width="1.1" stroke-linejoin="round"/><circle cx="11.6" cy="12.4" r="1.404" fill="#fffaf0" stroke="#e88a00" stroke-width=".6"/></svg>
<svg style="left:749px;top:101px" width="16" height="16" viewBox="0 0 16 16"><rect x="0.5" y=".5" width="7" height="11" fill="#fff" stroke="#f09020"/><path d="M0 1.2H8" stroke="#e87a10" stroke-width="2.4"/><path d="M2 4.5H6" stroke="#f0a040" stroke-width="1"/><path d="M2 6.5H6" stroke="#f0a040" stroke-width="1"/><path d="M2 8.5H6" stroke="#f0a040" stroke-width="1"/><path d="M2 10.5H6" stroke="#f0a040" stroke-width="1"/><rect x="9.5" y=".5" width="6" height="11" fill="#fff" stroke="#a0209a"/><path d="M9 1.2H16" stroke="#a01098" stroke-width="2.4"/><path d="M11 4.5H14" stroke="#b040b0" stroke-width="1"/><path d="M11 6.5H14" stroke="#b040b0" stroke-width="1"/><path d="M11 8.5H14" stroke="#b040b0" stroke-width="1"/><path d="M11 10.5H14" stroke="#b040b0" stroke-width="1"/><rect x="4.5" y=".5" width="7" height="11" fill="#fff" stroke="#10b8c0"/><path d="M4 1.2H12" stroke="#10c0c8" stroke-width="2.4"/><path d="M6 4.5H10" stroke="#20a8a8" stroke-width="1"/><path d="M6 6.5H10" stroke="#20a8a8" stroke-width="1"/><path d="M6 8.5H10" stroke="#20a8a8" stroke-width="1"/><path d="M6 10.5H10" stroke="#20a8a8" stroke-width="1"/><path d="M15.50 12.40L13.98 13.39L14.36 15.16L12.59 14.78L11.60 16.30L10.61 14.78L8.84 15.16L9.22 13.39L7.70 12.40L9.22 11.41L8.84 9.64L10.61 10.02L11.60 8.50L12.59 10.02L14.36 9.64L13.98 11.41Z" fill="#ffa41c" stroke="#f08a00" stroke-width="1.1" stroke-linejoin="round"/><circle cx="11.6" cy="12.4" r="1.404" fill="#fffaf0" stroke="#e88a00" stroke-width=".6"/></svg>
<div style="left:772px;top:100px;width:1px;height:18px;background:#a0a0a0"></div>
<div style="left:773px;top:100px;width:1px;height:18px;background:#ffffff"></div>
<svg style="left:780px;top:101px" width="16" height="16" viewBox="0 0 16 16"><rect x="0" y="0" width="2" height="16" fill="url(#gNavB)"/><path d="M15.3 .8V15.2L3.6 8Z" fill="url(#gNavL)" stroke="url(#gNavS)" stroke-width="1.3" stroke-linejoin="round"/></svg>
<svg style="left:803px;top:101px" width="16" height="16" viewBox="0 0 16 16"><path d="M14.3 .8V15.2L2.7 8Z" fill="url(#gNavL)" stroke="url(#gNavS)" stroke-width="1.3" stroke-linejoin="round"/></svg>
<svg style="left:826px;top:101px" width="16" height="16" viewBox="0 0 16 16"><path d="M1.7 .8V15.2L13.4 8Z" fill="url(#gNavR)" stroke="url(#gNavS)" stroke-width="1.3" stroke-linejoin="round"/></svg>
<svg style="left:849px;top:101px" width="16" height="16" viewBox="0 0 16 16"><path d="M.9 .8V15.2L12.6 8Z" fill="url(#gNavR)" stroke="url(#gNavS)" stroke-width="1.3" stroke-linejoin="round"/><rect x="14" y="0" width="2" height="16" fill="url(#gNavB)"/></svg>
<div style="left:872px;top:100px;width:1px;height:18px;background:#a0a0a0"></div>
<div style="left:873px;top:100px;width:1px;height:18px;background:#ffffff"></div>
<span class="t" style="top:129px;font-size:12.4px;left:20.60px;transform:scaleX(0.8958);transform-origin:0 0;">Дерево: Объект</span>
<div style="left:20px;top:146px;width:160px;height:432px;background:#fff"></div>
<div style="left:20px;top:146px;width:160px;height:1px;background:#a0a0a0"></div>
<div style="left:20px;top:146px;width:1px;height:432px;background:#a0a0a0"></div>
<div style="left:21px;top:147px;width:158px;height:1px;background:#696969"></div>
<div style="left:21px;top:147px;width:1px;height:430px;background:#696969"></div>
<div style="left:20px;top:577px;width:160px;height:1px;background:#ffffff"></div>
<div style="left:179px;top:146px;width:1px;height:432px;background:#ffffff"></div>
<div style="left:21px;top:576px;width:158px;height:1px;background:#e3e3e3"></div>
<div style="left:178px;top:147px;width:1px;height:430px;background:#e3e3e3"></div>
<svg style="left:26px;top:152px" width="40" height="40" viewBox="0 0 40 40" shape-rendering="crispEdges"><rect x=".5" y=".5" width="8" height="8" fill="#fff" stroke="#848484"/><path d="M2 4.5h5" stroke="#000"/><path d="M10 4.5h6 M24.5 12v24 M25 20.5h10 M25 36.5h10" stroke="#808080" stroke-dasharray="1 1" fill="none"/></svg>
<svg style="left:42px;top:148px" width="16" height="16" viewBox="0 0 16 16"><path d="M1.5 5.5Q1.5 1.5 4.5 1.5H7L8.6 3.2H13.5Q14.5 3.2 14.5 4.4V6" fill="#fffbb8" stroke="#8c8c00" stroke-width="1"/><path d="M.6 6.4H12.6L15 13H3.4Z" fill="#ffe888" stroke="#8c8c00" stroke-width="1" stroke-linejoin="round"/><path d="M14.6 4.6V9.5L15.6 13.4M3.2 13.9H15.4" stroke="#141400" stroke-width="1.2" fill="none"/><path d="M2 7.4H12" stroke="#fffbd0" stroke-width="1"/></svg>
<div style="left:61px;top:150px;width:29px;height:14px;background:#f0f0f0"></div>
<span class="t" style="top:148px;font-size:11px;left:63.80px;letter-spacing:-0.420px;">(Все)</span>
<svg style="left:62px;top:163px" width="16" height="16" viewBox="0 0 16 16"><path d="M.5 13.5V3.5Q.5 2.5 1.5 2.5H5.2L6.6 4H13.5V13.5Z" fill="#ffe498" stroke="#8c8c00" stroke-width="1" stroke-linejoin="round"/><path d="M1.5 5.2H12.5" stroke="#fff6d0" stroke-width="1"/><path d="M14.4 4.6V14.3H1.2" stroke="#0c0c00" stroke-width="1.2" fill="none"/></svg>
<span class="t" style="top:164px;font-size:11px;left:84.00px;letter-spacing:-0.006px;">Дом 1</span>
<svg style="left:62px;top:179px" width="16" height="16" viewBox="0 0 16 16"><path d="M.5 13.5V3.5Q.5 2.5 1.5 2.5H5.2L6.6 4H13.5V13.5Z" fill="#ffe498" stroke="#8c8c00" stroke-width="1" stroke-linejoin="round"/><path d="M1.5 5.2H12.5" stroke="#fff6d0" stroke-width="1"/><path d="M14.4 4.6V14.3H1.2" stroke="#0c0c00" stroke-width="1.2" fill="none"/></svg>
<span class="t" style="top:180px;font-size:11px;left:84.00px;letter-spacing:0.119px;">Дом 2</span>
<div style="left:184px;top:128px;width:738px;height:1px;background:#a0a0a0"></div>
<div style="left:184px;top:128px;width:1px;height:17px;background:#a0a0a0"></div>
<div style="left:184px;top:145px;width:738px;height:1px;background:#ffffff"></div>
<div style="left:921px;top:128px;width:1px;height:18px;background:#ffffff"></div>
<svg style="left:191px;top:132px" width="10" height="9" viewBox="0 0 10 9"><rect x=".5" y=".5" width="9" height="8" fill="#fff" stroke="#5a86e0"/><path d="M0 1.2H10" stroke="#5b8cf0" stroke-width="2.4"/><path d="M1 1.4H9" stroke="#8ab0f8" stroke-width=".8"/><path d="M0 8.6H10" stroke="#2c4c84" stroke-width=".9"/><path d="M2.4 4.5H4.6M5.6 4.5H7.8M2.4 6.5H4.6M5.6 6.5H7.8" stroke="#9aaee0" stroke-width="1"/></svg>
<span class="t" style="top:128px;font-size:11.5px;left:207.40px;letter-spacing:0.311px;font-weight:bold;">Состояние склада</span>
<span class="t" style="top:128px;font-size:11px;left:901.50px;letter-spacing:0.105px;">1/6</span>
<div style="left:184px;top:147px;width:738px;height:430px;background:#f6f2f6"></div>
<div style="left:184px;top:147px;width:738px;height:1px;background:#a0a0a0"></div>
<div style="left:184px;top:147px;width:1px;height:430px;background:#a0a0a0"></div>
<div style="left:185px;top:148px;width:736px;height:1px;background:#696969"></div>
<div style="left:185px;top:148px;width:1px;height:428px;background:#696969"></div>
<div style="left:184px;top:576px;width:738px;height:1px;background:#ffffff"></div>
<div style="left:921px;top:147px;width:1px;height:430px;background:#ffffff"></div>
<div style="left:185px;top:575px;width:736px;height:1px;background:#e3e3e3"></div>
<div style="left:920px;top:148px;width:1px;height:428px;background:#e3e3e3"></div>
<div style="left:186px;top:149px;width:18px;height:15px;background:#fff"></div>
<div style="left:187px;top:150px;width:16px;height:14px;background:linear-gradient(#ffffff 0,#ffffff 6px,#f3f5fd 6px,#f3f1f6 100%)"></div>
<div style="left:204px;top:149px;width:1px;height:15px;background:#dfe3ec"></div>
<div style="left:205px;top:149px;width:70px;height:15px;background:#fff"></div>
<div style="left:206px;top:150px;width:68px;height:14px;background:linear-gradient(#ffffff 0,#ffffff 6px,#f3f5fd 6px,#f3f1f6 100%)"></div>
<div style="left:275px;top:149px;width:1px;height:15px;background:#dfe3ec"></div>
<div style="left:276px;top:149px;width:70px;height:15px;background:#fff"></div>
<div style="left:277px;top:150px;width:68px;height:14px;background:linear-gradient(#ffffff 0,#ffffff 6px,#f3f5fd 6px,#f3f1f6 100%)"></div>
<div style="left:346px;top:149px;width:1px;height:15px;background:#dfe3ec"></div>
<div style="left:347px;top:149px;width:92px;height:15px;background:#fff"></div>
<div style="left:348px;top:150px;width:90px;height:14px;background:linear-gradient(#ffffff 0,#ffffff 6px,#f3f5fd 6px,#f3f1f6 100%)"></div>
<div style="left:439px;top:149px;width:1px;height:15px;background:#dfe3ec"></div>
<div style="left:440px;top:149px;width:118px;height:15px;background:#fff"></div>
<div style="left:441px;top:150px;width:116px;height:14px;background:linear-gradient(#ffffff 0,#ffffff 6px,#f3f5fd 6px,#f3f1f6 100%)"></div>
<div style="left:558px;top:149px;width:1px;height:15px;background:#dfe3ec"></div>
<div style="left:559px;top:149px;width:74px;height:15px;background:#fff"></div>
<div style="left:560px;top:150px;width:72px;height:14px;background:linear-gradient(#ffffff 0,#ffffff 6px,#f3f5fd 6px,#f3f1f6 100%)"></div>
<div style="left:633px;top:149px;width:1px;height:15px;background:#dfe3ec"></div>
<div style="left:186px;top:164px;width:448px;height:1px;background:#d0d0d0"></div>
<div style="left:186px;top:165px;width:448px;height:1px;background:#fff"></div>
<span class="t" style="top:149px;font-size:12px;left:209.10px;transform:scaleX(0.9200);transform-origin:0 0;">Код объекта</span>
<span class="t" style="top:149px;font-size:12px;left:277.50px;transform:scaleX(0.8932);transform-origin:0 0;">Объект</span>
<span class="t" style="top:149px;font-size:12px;left:360.60px;transform:scaleX(0.8984);transform-origin:0 0;">Код материала</span>
<span class="t" style="top:149px;font-size:12px;left:442.00px;transform:scaleX(0.8989);transform-origin:0 0;">Материал</span>
<span class="t" style="top:149px;font-size:12px;left:572.40px;transform:scaleX(0.9001);transform-origin:0 0;">Количество</span>
<div style="left:186px;top:166px;width:18px;height:24px;background:#fff"></div>
<div style="left:187px;top:167px;width:16px;height:22px;background:linear-gradient(#ffffff 0,#ffffff 8px,#f4f5fd 8px,#f4f1f6 100%)"></div>
<div style="left:204px;top:166px;width:1px;height:24px;background:#dfe3ec"></div>
<div style="left:205px;top:166px;width:70px;height:24px;background:#cfe5fd"></div>
<div style="left:275px;top:166px;width:1px;height:25px;background:#c0c0c0"></div>
<div style="left:276px;top:166px;width:70px;height:24px;background:#cfe5fd"></div>
<div style="left:346px;top:166px;width:1px;height:25px;background:#c0c0c0"></div>
<div style="left:347px;top:166px;width:92px;height:24px;background:#cfe5fd"></div>
<div style="left:439px;top:166px;width:1px;height:25px;background:#c0c0c0"></div>
<div style="left:440px;top:166px;width:118px;height:24px;background:#cfe5fd"></div>
<div style="left:558px;top:166px;width:1px;height:25px;background:#c0c0c0"></div>
<div style="left:559px;top:166px;width:74px;height:24px;background:#cfe5fd"></div>
<div style="left:633px;top:166px;width:1px;height:25px;background:#c0c0c0"></div>
<div style="left:186px;top:190px;width:448px;height:1px;background:#c8c8c8"></div>
<span class="t" style="top:165px;font-size:12px;left:266.46px;transform:scaleX(0.9200);transform-origin:0 0;">1</span>
<span class="t" style="top:165px;font-size:12px;left:278.20px;transform:scaleX(0.9159);transform-origin:0 0;">Дом 1</span>
<span class="t" style="top:165px;font-size:12px;left:430.26px;transform:scaleX(0.9200);transform-origin:0 0;">1</span>
<span class="t" style="top:165px;font-size:12px;left:442.20px;transform:scaleX(0.9143);transform-origin:0 0;">Бетон</span>
<span class="t" style="top:165px;font-size:12px;left:604.60px;transform:scaleX(0.8792);transform-origin:0 0;">53,00</span>
<div style="left:186px;top:191px;width:18px;height:24px;background:#fff"></div>
<div style="left:187px;top:192px;width:16px;height:22px;background:linear-gradient(#ffffff 0,#ffffff 8px,#f4f5fd 8px,#f4f1f6 100%)"></div>
<div style="left:204px;top:191px;width:1px;height:24px;background:#dfe3ec"></div>
<div style="left:205px;top:191px;width:70px;height:24px;background:#ffffd9"></div>
<div style="left:275px;top:191px;width:1px;height:25px;background:#c0c0c0"></div>
<div style="left:276px;top:191px;width:70px;height:24px;background:#ffffd9"></div>
<div style="left:346px;top:191px;width:1px;height:25px;background:#c0c0c0"></div>
<div style="left:347px;top:191px;width:92px;height:24px;background:#fff"></div>
<div style="left:439px;top:191px;width:1px;height:25px;background:#c0c0c0"></div>
<div style="left:440px;top:191px;width:118px;height:24px;background:#ffffd9"></div>
<div style="left:558px;top:191px;width:1px;height:25px;background:#c0c0c0"></div>
<div style="left:559px;top:191px;width:74px;height:24px;background:#fff"></div>
<div style="left:633px;top:191px;width:1px;height:25px;background:#c0c0c0"></div>
<div style="left:186px;top:215px;width:448px;height:1px;background:#c8c8c8"></div>
<span class="t" style="top:190px;font-size:12px;left:266.46px;transform:scaleX(0.9200);transform-origin:0 0;">1</span>
<span class="t" style="top:190px;font-size:12px;left:278.20px;transform:scaleX(0.9159);transform-origin:0 0;">Дом 1</span>
<span class="t" style="top:190px;font-size:12px;left:430.26px;transform:scaleX(0.9200);transform-origin:0 0;">2</span>
<span class="t" style="top:190px;font-size:12px;left:442.20px;transform:scaleX(0.9362);transform-origin:0 0;">Газобетон</span>
<span class="t" style="top:190px;font-size:12px;left:598.40px;transform:scaleX(0.8883);transform-origin:0 0;">100,00</span>
<div style="left:186px;top:216px;width:18px;height:24px;background:#fff"></div>
<div style="left:187px;top:217px;width:16px;height:22px;background:linear-gradient(#ffffff 0,#ffffff 8px,#f4f5fd 8px,#f4f1f6 100%)"></div>
<div style="left:204px;top:216px;width:1px;height:24px;background:#dfe3ec"></div>
<div style="left:205px;top:216px;width:70px;height:24px;background:#ffffd9"></div>
<div style="left:275px;top:216px;width:1px;height:25px;background:#c0c0c0"></div>
<div style="left:276px;top:216px;width:70px;height:24px;background:#ffffd9"></div>
<div style="left:346px;top:216px;width:1px;height:25px;background:#c0c0c0"></div>
<div style="left:347px;top:216px;width:92px;height:24px;background:#fff"></div>
<div style="left:439px;top:216px;width:1px;height:25px;background:#c0c0c0"></div>
<div style="left:440px;top:216px;width:118px;height:24px;background:#ffffd9"></div>
<div style="left:558px;top:216px;width:1px;height:25px;background:#c0c0c0"></div>
<div style="left:559px;top:216px;width:74px;height:24px;background:#fff"></div>
<div style="left:633px;top:216px;width:1px;height:25px;background:#c0c0c0"></div>
<div style="left:186px;top:240px;width:448px;height:1px;background:#c8c8c8"></div>
<span class="t" style="top:215px;font-size:12px;left:266.46px;transform:scaleX(0.9200);transform-origin:0 0;">1</span>
<span class="t" style="top:215px;font-size:12px;left:278.20px;transform:scaleX(0.9159);transform-origin:0 0;">Дом 1</span>
<span class="t" style="top:215px;font-size:12px;left:430.26px;transform:scaleX(0.9200);transform-origin:0 0;">3</span>
<span class="t" style="top:215px;font-size:12px;left:442.20px;transform:scaleX(0.9254);transform-origin:0 0;">Пазогребневая плита</span>
<span class="t" style="top:215px;font-size:12px;left:598.40px;transform:scaleX(0.8883);transform-origin:0 0;">100,00</span>
<div style="left:186px;top:241px;width:18px;height:24px;background:#fff"></div>
<div style="left:187px;top:242px;width:16px;height:22px;background:linear-gradient(#ffffff 0,#ffffff 8px,#f4f5fd 8px,#f4f1f6 100%)"></div>
<div style="left:204px;top:241px;width:1px;height:24px;background:#dfe3ec"></div>
<div style="left:205px;top:241px;width:70px;height:24px;background:#ffffd9"></div>
<div style="left:275px;top:241px;width:1px;height:25px;background:#c0c0c0"></div>
<div style="left:276px;top:241px;width:70px;height:24px;background:#ffffd9"></div>
<div style="left:346px;top:241px;width:1px;height:25px;background:#c0c0c0"></div>
<div style="left:347px;top:241px;width:92px;height:24px;background:#fff"></div>
<div style="left:439px;top:241px;width:1px;height:25px;background:#c0c0c0"></div>
<div style="left:440px;top:241px;width:118px;height:24px;background:#ffffd9"></div>
<div style="left:558px;top:241px;width:1px;height:25px;background:#c0c0c0"></div>
<div style="left:559px;top:241px;width:74px;height:24px;background:#fff"></div>
<div style="left:633px;top:241px;width:1px;height:25px;background:#c0c0c0"></div>
<div style="left:186px;top:265px;width:448px;height:1px;background:#c8c8c8"></div>
<span class="t" style="top:240px;font-size:12px;left:266.46px;transform:scaleX(0.9200);transform-origin:0 0;">1</span>
<span class="t" style="top:240px;font-size:12px;left:278.20px;transform:scaleX(0.9159);transform-origin:0 0;">Дом 1</span>
<span class="t" style="top:240px;font-size:12px;left:430.26px;transform:scaleX(0.9200);transform-origin:0 0;">4</span>
<span class="t" style="top:240px;font-size:12px;left:442.20px;transform:scaleX(0.9089);transform-origin:0 0;">ДВП</span>
<span class="t" style="top:240px;font-size:12px;left:598.40px;transform:scaleX(0.8883);transform-origin:0 0;">100,00</span>
<div style="left:186px;top:266px;width:18px;height:24px;background:#fff"></div>
<div style="left:187px;top:267px;width:16px;height:22px;background:linear-gradient(#ffffff 0,#ffffff 8px,#f4f5fd 8px,#f4f1f6 100%)"></div>
<div style="left:204px;top:266px;width:1px;height:24px;background:#dfe3ec"></div>
<div style="left:205px;top:266px;width:70px;height:24px;background:#ffffd9"></div>
<div style="left:275px;top:266px;width:1px;height:25px;background:#c0c0c0"></div>
<div style="left:276px;top:266px;width:70px;height:24px;background:#ffffd9"></div>
<div style="left:346px;top:266px;width:1px;height:25px;background:#c0c0c0"></div>
<div style="left:347px;top:266px;width:92px;height:24px;background:#fff"></div>
<div style="left:439px;top:266px;width:1px;height:25px;background:#c0c0c0"></div>
<div style="left:440px;top:266px;width:118px;height:24px;background:#ffffd9"></div>
<div style="left:558px;top:266px;width:1px;height:25px;background:#c0c0c0"></div>
<div style="left:559px;top:266px;width:74px;height:24px;background:#fff"></div>
<div style="left:633px;top:266px;width:1px;height:25px;background:#c0c0c0"></div>
<div style="left:186px;top:290px;width:448px;height:1px;background:#c8c8c8"></div>
<span class="t" style="top:265px;font-size:12px;left:266.46px;transform:scaleX(0.9200);transform-origin:0 0;">1</span>
<span class="t" style="top:265px;font-size:12px;left:278.20px;transform:scaleX(0.9159);transform-origin:0 0;">Дом 1</span>
<span class="t" style="top:265px;font-size:12px;left:430.26px;transform:scaleX(0.9200);transform-origin:0 0;">5</span>
<span class="t" style="top:265px;font-size:12px;left:442.20px;transform:scaleX(0.8852);transform-origin:0 0;">ДСП</span>
<span class="t" style="top:265px;font-size:12px;left:598.40px;transform:scaleX(0.8883);transform-origin:0 0;">100,00</span>
<div style="left:186px;top:291px;width:18px;height:24px;background:#fff"></div>
<div style="left:187px;top:292px;width:16px;height:22px;background:linear-gradient(#ffffff 0,#ffffff 8px,#f4f5fd 8px,#f4f1f6 100%)"></div>
<div style="left:204px;top:291px;width:1px;height:24px;background:#dfe3ec"></div>
<div style="left:205px;top:291px;width:70px;height:24px;background:#ffffd9"></div>
<div style="left:275px;top:291px;width:1px;height:25px;background:#c0c0c0"></div>
<div style="left:276px;top:291px;width:70px;height:24px;background:#ffffd9"></div>
<div style="left:346px;top:291px;width:1px;height:25px;background:#c0c0c0"></div>
<div style="left:347px;top:291px;width:92px;height:24px;background:#fff"></div>
<div style="left:439px;top:291px;width:1px;height:25px;background:#c0c0c0"></div>
<div style="left:440px;top:291px;width:118px;height:24px;background:#ffffd9"></div>
<div style="left:558px;top:291px;width:1px;height:25px;background:#c0c0c0"></div>
<div style="left:559px;top:291px;width:74px;height:24px;background:#fff"></div>
<div style="left:633px;top:291px;width:1px;height:25px;background:#c0c0c0"></div>
<div style="left:186px;top:315px;width:448px;height:1px;background:#c8c8c8"></div>
<span class="t" style="top:290px;font-size:12px;left:266.46px;transform:scaleX(0.9200);transform-origin:0 0;">2</span>
<span class="t" style="top:290px;font-size:12px;left:278.20px;transform:scaleX(0.9159);transform-origin:0 0;">Дом 2</span>
<span class="t" style="top:290px;font-size:12px;left:430.26px;transform:scaleX(0.9200);transform-origin:0 0;">1</span>
<span class="t" style="top:290px;font-size:12px;left:442.20px;transform:scaleX(0.9143);transform-origin:0 0;">Бетон</span>
<span class="t" style="top:290px;font-size:12px;left:604.60px;transform:scaleX(0.8792);transform-origin:0 0;">10,00</span>
<div style="left:205px;top:166px;width:70px;height:24px;border:1px solid #000"></div>
<svg style="left:193px;top:173px" width="6" height="11" viewBox="0 0 6 11"><path d="M0 0L6 5.5L0 11z" fill="#000"/></svg>
<div style="left:8px;top:591px;width:513px;height:1px;background:#a0a0a0"></div>
<div style="left:8px;top:591px;width:1px;height:18px;background:#a0a0a0"></div>
<div style="left:8px;top:609px;width:513px;height:1px;background:#ffffff"></div>
<div style="left:520px;top:591px;width:1px;height:19px;background:#ffffff"></div>
<div style="left:524px;top:591px;width:23px;height:1px;background:#a0a0a0"></div>
<div style="left:524px;top:591px;width:1px;height:18px;background:#a0a0a0"></div>
<div style="left:524px;top:609px;width:23px;height:1px;background:#ffffff"></div>
<div style="left:546px;top:591px;width:1px;height:19px;background:#ffffff"></div>
<div style="left:549px;top:591px;width:159px;height:1px;background:#a0a0a0"></div>
<div style="left:549px;top:591px;width:1px;height:18px;background:#a0a0a0"></div>
<div style="left:549px;top:609px;width:159px;height:1px;background:#ffffff"></div>
<div style="left:707px;top:591px;width:1px;height:19px;background:#ffffff"></div>
<div style="left:710px;top:591px;width:49px;height:1px;background:#a0a0a0"></div>
<div style="left:710px;top:591px;width:1px;height:18px;background:#a0a0a0"></div>
<div style="left:710px;top:609px;width:49px;height:1px;background:#ffffff"></div>
<div style="left:758px;top:591px;width:1px;height:19px;background:#ffffff"></div>
<div style="left:761px;top:591px;width:86px;height:1px;background:#a0a0a0"></div>
<div style="left:761px;top:591px;width:1px;height:18px;background:#a0a0a0"></div>
<div style="left:761px;top:609px;width:86px;height:1px;background:#ffffff"></div>
<div style="left:846px;top:591px;width:1px;height:19px;background:#ffffff"></div>
<div style="left:850px;top:591px;width:65px;height:1px;background:#a0a0a0"></div>
<div style="left:850px;top:591px;width:1px;height:18px;background:#a0a0a0"></div>
<div style="left:850px;top:609px;width:65px;height:1px;background:#ffffff"></div>
<div style="left:914px;top:591px;width:1px;height:19px;background:#ffffff"></div>
<span class="t" style="top:592px;font-size:11px;left:12.80px;letter-spacing:0.407px;">Готово</span>
<span class="t" style="top:592px;font-size:11px;left:528.70px;letter-spacing:-0.712px;">БД:</span>
<span class="t" style="top:592px;font-size:11px;left:553.00px;letter-spacing:-0.287px;">C:\BuildingIndividualHouses.mdb</span>
<span class="t" style="top:592px;font-size:11px;left:715.00px;letter-spacing:-0.362px;">1 668 Kb</span>
<div style="left:764px;top:592px;width:82px;height:17px;overflow:hidden">
<span class="t" style="top:0px;font-size:11px;left:1.50px;letter-spacing:0.220px;">Администратор</span>
</div>
<span class="t" style="top:592px;font-size:11px;left:855.40px;letter-spacing:-0.205px;">10.06.2016</span>
<svg style="left:921px;top:597px" width="13" height="13" viewBox="0 0 13 13"><path d="M12 1l-11 11M12 5l-7 7M12 9l-3 3" stroke="#9c9c9c" stroke-width="1.5"/><path d="M12 2.4l-9.6 9.6M12 6.4l-5.6 5.6M12 10.4l-1.6 1.6" stroke="#fff" stroke-width="1"/></svg>
</body></html>
